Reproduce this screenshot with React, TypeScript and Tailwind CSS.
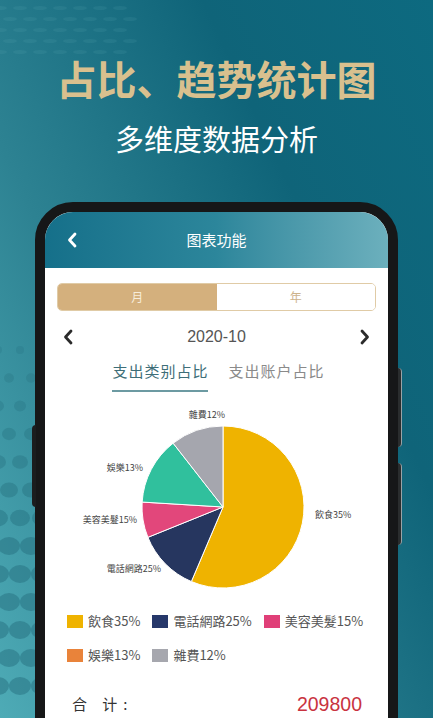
import React from 'react';

const slices = [
    { name: '飲食', from: 0, to: 203, color: '#efb300' },
    { name: '電話網路', from: 203, to: 248, color: '#26365f' },
    { name: '美容美髮', from: 248, to: 273.5, color: '#e2477b' },
    { name: '娛樂', from: 273.5, to: 322, color: '#30c09d' },
    { name: '雜費', from: 322, to: 360, color: '#a5a6ae' },
];

const legend = [
    [
        { label: '飲食35%', color: 'bg-[#efb300]' },
        { label: '電話網路25%', color: 'bg-[#26386a]' },
        { label: '美容美髮15%', color: 'bg-[#e03f78]' },
    ],
    [
        { label: '娛樂13%', color: 'bg-[#e9833a]' },
        { label: '雜費12%', color: 'bg-[#a6a7ae]' },
    ],
];

function point(cx: number, cy: number, r: number, deg: number) {
    const a = (deg * Math.PI) / 180;
    return [cx + r * Math.sin(a), cy - r * Math.cos(a)];
}

function slicePath(cx: number, cy: number, r: number, from: number, to: number) {
    const [x0, y0] = point(cx, cy, r, from);
    const [x1, y1] = point(cx, cy, r, to);
    const large = to - from > 180 ? 1 : 0;
    return `M${cx},${cy} L${x0},${y0} A${r},${r} 0 ${large} 1 ${x1},${y1} Z`;
}

function Dots() {
    // decorative dot pattern of the background
    const dots: React.ReactNode[] = [];
    for (let row = 0; row < 13; row++) {
        for (let col = 0; col < 4; col++) {
            const x = col * 22 + (row % 2) * 11 - 2;
            const y = 350 + row * 28;
            const s = Math.min(1, row / 7);
            dots.push(
                <ellipse key={`${row}-${col}`} cx={x} cy={y} rx={4 + 7 * s} ry={4 + 5 * s} fill="#25707f" opacity={0.25 + 0.25 * s} />
            );
        }
    }
    for (let row = 0; row < 5; row++) {
        for (let col = 0; col < 7; col++) {
            dots.push(
                <ellipse key={`t${row}-${col}`} cx={col * 20 + (row % 2) * 10} cy={8 + row * 11} rx={7} ry={2} fill="#6fb3c0" opacity={0.12} />
            );
        }
    }
    return (
        <svg className="absolute inset-0" width="433" height="718" viewBox="0 0 433 718">
            {dots}
        </svg>
    );
}

function Chevron({ dir, className }: { dir: 'left' | 'right'; className?: string }) {
    return (
        <svg width="10" height="16" viewBox="0 0 10 16" className={className}>
            <path
                d={dir === 'left' ? 'M8 2 L2.5 8 L8 14' : 'M2 2 L7.5 8 L2 14'}
                fill="none"
                stroke="currentColor"
                strokeWidth="2.8"
                strokeLinecap="round"
                strokeLinejoin="round"
            />
        </svg>
    );
}

function PieChart() {
    const cx = 178;
    const cy = 102;
    const r = 81;
    return (
        <svg width="343" height="190" viewBox="0 0 343 190" className="block">
            {slices.map((s) => (
                <path key={s.name} d={slicePath(cx, cy, r, s.from, s.to)} fill={s.color} stroke="#ffffff" strokeWidth="1" />
            ))}
            <g fontSize="9" fill="#444" fontFamily="'Noto Sans CJK SC', sans-serif">
                <text x="162" y="13" textAnchor="middle">雜費12%</text>
                <text x="98" y="66" textAnchor="end">娛樂13%</text>
                <text x="92" y="118" textAnchor="end">美容美髮15%</text>
                <text x="116" y="167" textAnchor="end">電話網路25%</text>
                <text x="270" y="113" textAnchor="start">飲食35%</text>
            </g>
        </svg>
    );
}

export default function App() {
    return (
        <div
            className="relative h-[718px] w-[433px] overflow-hidden bg-[linear-gradient(65deg,#4eabb6_0%,#2d8292_35%,#0f6479_70%,#0d6a80_100%)]"
            style={{ fontFamily: "'Noto Sans CJK SC', 'Noto Sans', sans-serif" }}
        >
            <Dots />

            <div className="relative flex flex-col items-center pt-[54px]">
                <h1 className="text-[40px] font-bold leading-[48px] text-[#d9c08e]">占比、趋势统计图</h1>
                <p className="mt-[18px] text-[29px] leading-[36px] text-white">多维度数据分析</p>
            </div>

            {/* Phone */}
            <div className="relative ml-[35px] mt-[46px] w-[363px]">
                <div className="absolute left-[-3px] top-[223px] h-[82px] w-[4px] rounded-l-sm bg-[#1b1d1e]" />
                <div className="absolute right-[-4px] top-[166px] h-[79px] w-[4px] rounded-r-sm bg-[#2a2d2e] border-r border-[#9aa3a6]" />
                <div className="absolute right-[-4px] top-[261px] h-[82px] w-[4px] rounded-r-sm bg-[#2a2d2e] border-r border-[#9aa3a6]" />

                <div className="h-[560px] overflow-hidden rounded-[38px] border-[10px] border-[#161718] bg-white">
                    {/* Header */}
                    <div className="relative flex h-[56px] items-center justify-center bg-gradient-to-r from-[#15708a] via-[#2c869b] to-[#6cb0bd]">
                        <Chevron dir="left" className="absolute left-[22px] text-white" />
                        <span className="text-[15px] text-white">图表功能</span>
                    </div>

                    {/* Month / year toggle */}
                    <div className="mx-[12px] mt-[15px] flex h-[28px] overflow-hidden rounded-[5px] border border-[#e0cba6]">
                        <div className="flex flex-1 items-center justify-center bg-[#d4b07d] text-[12px] text-[#f7ecd9]">月</div>
                        <div className="flex flex-1 items-center justify-center bg-white text-[12px] text-[#cdb38c]">年</div>
                    </div>

                    {/* Date row */}
                    <div className="mt-[14px] flex items-center justify-between px-[18px] text-[#2b2b2b]">
                        <Chevron dir="left" />
                        <span className="text-[16px] leading-[24px] text-[#555]" style={{ fontFamily: "'Liberation Sans', sans-serif" }}>2020-10</span>
                        <Chevron dir="right" />
                    </div>

                    {/* Tabs */}
                    <div className="mt-[11px] flex justify-center gap-[20px] pl-[4px] text-[15px] leading-[22px]">
                        <div className="flex flex-col items-center">
                            <span className="tracking-[1px] text-[#3e6e78]">支出类别占比</span>
                            <div className="mt-[8px] h-[2px] w-[96px] bg-[#6c9aa2]" />
                        </div>
                        <span className="tracking-[1px] text-[#8a8a8a]">支出账户占比</span>
                    </div>

                    {/* Pie */}
                    <div className="mt-[13px]">
                        <PieChart />
                    </div>

                    {/* Legend */}
                    <div className="mt-[18px] flex flex-col gap-[18px] pl-[22px] text-[13px] leading-[16px] text-[#555]">
                        {legend.map((row, i) => (
                            <div key={i} className="flex gap-[12px]">
                                {row.map((item) => (
                                    <div key={item.label} className="flex items-center gap-[5px]">
                                        <span className={`h-[13px] w-[16px] ${item.color}`} />
                                        <span>{item.label}</span>
                                    </div>
                                ))}
                            </div>
                        ))}
                    </div>

                    {/* Total */}
                    <div className="mt-[27px] flex items-center justify-between pl-[27px] pr-[26px]">
                        <span className="text-[15px] tracking-[6px] text-[#333]">合 计:</span>
                        <span className="text-[19.5px] text-[#c9333f]" style={{ fontFamily: "'Liberation Sans', sans-serif" }}>209800</span>
                    </div>
                </div>
            </div>
        </div>
    );
}
